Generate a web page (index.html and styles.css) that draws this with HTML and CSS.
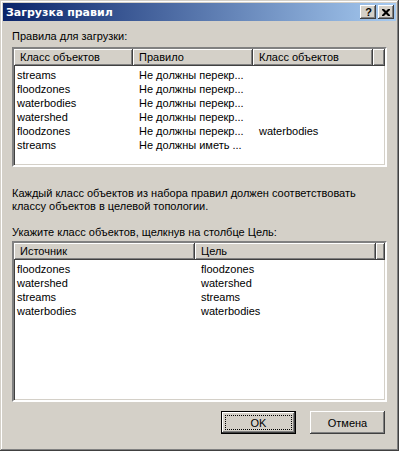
FILE: index.html
```html
<!DOCTYPE html>
<html>
<head>
    <title>Загрузка правил</title>
    <link rel="stylesheet" href="styles.css">
</head>
<body>
    <div class="window">
        <div class="titlebar">
            <span class="title">Загрузка правил</span>
            <div class="caption-buttons">
                <div class="cap-btn help">?</div>
                <div class="cap-btn close">
                    <svg width="8" height="7" viewBox="0 0 8 7">
                        <path d="M0 0h2l2 2 2-2h2v1l-2.5 2.5 2.5 2.5v1h-2l-2-2-2 2h-2v-1l2.5-2.5-2.5-2.5z" fill="#000"/>
                    </svg>
                </div>
            </div>
        </div>

        <div class="content">
            <div class="label">Правила для загрузки:</div>
            <div class="listview rules">
                <div class="header">
                    <div class="col c1">Класс объектов</div>
                    <div class="col c2">Правило</div>
                    <div class="col c3">Класс объектов</div>
                    <div class="col filler"></div>
                </div>
                <div class="rows">
                    <div class="row"><span class="c1">streams</span><span class="c2">Не должны перекр...</span><span class="c3"></span></div>
                    <div class="row"><span class="c1">floodzones</span><span class="c2">Не должны перекр...</span><span class="c3"></span></div>
                    <div class="row"><span class="c1">waterbodies</span><span class="c2">Не должны перекр...</span><span class="c3"></span></div>
                    <div class="row"><span class="c1">watershed</span><span class="c2">Не должны перекр...</span><span class="c3"></span></div>
                    <div class="row"><span class="c1">floodzones</span><span class="c2">Не должны перекр...</span><span class="c3">waterbodies</span></div>
                    <div class="row"><span class="c1">streams</span><span class="c2">Не должны иметь ...</span><span class="c3"></span></div>
                </div>
            </div>

            <p class="note">Каждый класс объектов из набора правил должен соответствовать классу объектов в целевой топологии.</p>
            <div class="label">Укажите класс объектов, щелкнув на столбце Цель:</div>

            <div class="listview mapping">
                <div class="header">
                    <div class="col m1">Источник</div>
                    <div class="col m2">Цель</div>
                    <div class="col filler"></div>
                </div>
                <div class="rows">
                    <div class="row"><span class="m1">floodzones</span><span class="m2">floodzones</span></div>
                    <div class="row"><span class="m1">watershed</span><span class="m2">watershed</span></div>
                    <div class="row"><span class="m1">streams</span><span class="m2">streams</span></div>
                    <div class="row"><span class="m1">waterbodies</span><span class="m2">waterbodies</span></div>
                </div>
            </div>

            <div class="buttons">
                <div class="btn default"><span class="focus">OK</span></div>
                <div class="btn">Отмена</div>
            </div>
        </div>
    </div>
</body>
</html>
```

FILE: styles.css
```css
body {
    margin: 0;
    background-color: #D4D0C8;
    font-family: "Liberation Sans", Arial, sans-serif;
    font-size: 11px;
    color: #000000;
}

.window {
    width: 399px;
    height: 451px;
    box-sizing: border-box;
    padding: 3px;
    background-color: #D4D0C8;
    box-shadow: inset -1px -1px #404040, inset 1px 1px #D4D0C8,
                inset -2px -2px #808080, inset 2px 2px #FFFFFF;
}

.titlebar {
    height: 18px;
    display: flex;
    align-items: center;
    justify-content: space-between;
    background: linear-gradient(90deg, #0A246A 0%, #A6CAF0 100%);
    padding: 0 2px 0 3px;
}

.title {
    color: #FFFFFF;
    font-weight: bold;
    font-size: 11px;
    font-family: "DejaVu Sans", sans-serif;
}

.caption-buttons {
    display: flex;
    gap: 2px;
}

.cap-btn {
    width: 16px;
    height: 14px;
    box-sizing: border-box;
    background-color: #D4D0C8;
    box-shadow: inset -1px -1px #404040, inset 1px 1px #FFFFFF,
                inset -2px -2px #808080, inset 2px 2px #D4D0C8;
    display: flex;
    align-items: center;
    justify-content: center;
}

.help {
    font-weight: bold;
    font-size: 11px;
    line-height: 14px;
    padding-left: 1px;
}

.content {
    padding: 0 9px;
    display: flex;
    flex-direction: column;
}

.label {
    line-height: 13px;
    margin-top: 9px;
}

.note {
    margin: 20px 0 0 0;
    line-height: 13px;
}

.note + .label {
    margin-top: 13px;
}

.listview {
    margin-top: 4px;
    background-color: #FFFFFF;
    border-style: solid;
    border-width: 2px;
    border-color: #808080 #FFFFFF #FFFFFF #808080;
    box-shadow: inset 1px 1px #404040, inset -1px -1px #D4D0C8;
    overflow: hidden;
}

.rules {
    height: 116px;
}

.mapping {
    margin-top: 2px;
    height: 157px;
}

.header {
    display: flex;
    height: 17px;
    background-color: #D4D0C8;
}

.col {
    box-sizing: border-box;
    height: 17px;
    line-height: 16px;
    padding-left: 6px;
    box-shadow: inset -1px -1px #404040, inset 1px 1px #FFFFFF,
                inset -2px -2px #808080;
    white-space: nowrap;
}

.filler {
    flex: 1;
}

.rows {
    padding-top: 2px;
}

.row {
    display: flex;
    height: 14px;
    line-height: 14px;
    white-space: nowrap;
}

.row span {
    padding-left: 3px;
    box-sizing: border-box;
    flex-shrink: 0;
}

.c1 { width: 119px; }
.c2 { width: 120px; }
.c3 { width: 120px; }

.m1 { width: 181px; }
.m2 { width: 181px; }

.row .c2,
.row .c3,
.row .m2 {
    padding-left: 6px;
}

.buttons {
    display: flex;
    justify-content: flex-end;
    gap: 14px;
    margin-top: 9px;
    padding-right: 2px;
}

.btn {
    width: 75px;
    height: 23px;
    box-sizing: border-box;
    display: flex;
    align-items: center;
    justify-content: center;
    background-color: #D4D0C8;
    box-shadow: inset -1px -1px #404040, inset 1px 1px #FFFFFF,
                inset -2px -2px #808080, inset 2px 2px #D4D0C8;
}

.btn.default {
    border: 1px solid #000000;
    padding: 3px;
}

.focus {
    flex: 1;
    align-self: stretch;
    display: flex;
    align-items: center;
    justify-content: center;
    border: 1px dotted #000000;
}
```
